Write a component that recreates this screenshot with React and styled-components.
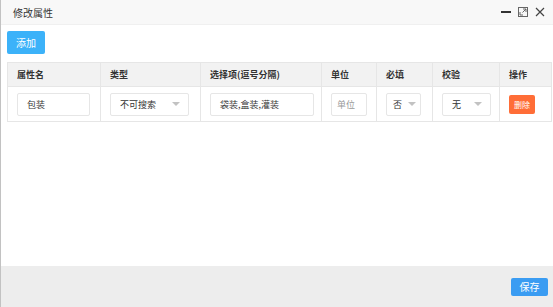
import styled, { createGlobalStyle } from "styled-components"

const Global = createGlobalStyle`
  html, body { margin: 0; padding: 0; background: #fff; }
  body { font-family: "Noto Sans CJK SC", "Liberation Sans", sans-serif; }
  * { box-sizing: border-box; }
`

const columns = [
  { title: "属性名", width: 93 },
  { title: "类型", width: 100 },
  { title: "选择项(逗号分隔)", width: 121 },
  { title: "单位", width: 55 },
  { title: "必填", width: 56 },
  { title: "校验", width: 67 },
  { title: "操作", width: 52 },
]

const App = () => {
  return (
    <Window>
      <Global />
      <TitleBar>
        <Title>修改属性</Title>
        <Tools>
          <svg width="10" height="10" viewBox="0 0 10 10">
            <rect x="0" y="4" width="10" height="2" fill="#333" />
          </svg>
          <svg width="10" height="10" viewBox="0 0 10 10">
            <rect x="0.5" y="0.5" width="9" height="9" fill="none" stroke="#666" />
            <path d="M5 2 H8 V5 M8 2 L4.5 5.5 M2 5 V8 H5" fill="none" stroke="#666" strokeWidth="1" />
          </svg>
          <svg width="10" height="10" viewBox="0 0 10 10">
            <path d="M1 1 L9 9 M9 1 L1 9" stroke="#444" strokeWidth="1.2" />
          </svg>
        </Tools>
      </TitleBar>
      <Body>
        <Button $color="#3cb2f9">添加</Button>
        <Table>
          <colgroup>
            {columns.map((c) => (
              <col key={c.title} style={{ width: c.width }} />
            ))}
          </colgroup>
          <thead>
            <tr>
              {columns.map((c) => (
                <Th key={c.title}>{c.title}</Th>
              ))}
            </tr>
          </thead>
          <tbody>
            <tr>
              <Td><Input $w={73}>包装</Input></Td>
              <Td><Select $w={79}>不可搜索<Caret /></Select></Td>
              <Td><Input $w={104}>袋装,盒装,灌装</Input></Td>
              <Td><Input $w={36} $placeholder>单位</Input></Td>
              <Td><Select $w={35} $compact>否<Caret /></Select></Td>
              <Td><Select $w={49}>无<Caret /></Select></Td>
              <Td><Danger>删除</Danger></Td>
            </tr>
          </tbody>
        </Table>
      </Body>
      <Footer>
        <Button $color="#3a9cf2" $small>保存</Button>
      </Footer>
    </Window>
  )
}

const Window = styled.div`
  display: flex;
  flex-direction: column;
  height: 307px;
  width: 553px;
  border-left: 1px solid #c2c2c2;
  overflow: hidden;
`

const TitleBar = styled.div`
  display: flex;
  align-items: center;
  justify-content: space-between;
  height: 25px;
  padding: 0 8px 0 12px;
  background: #f8f8f8;
  border-bottom: 1px solid #f0f0f0;
`

const Title = styled.div`
  font-size: 10px;
  color: #333;
`

const Tools = styled.div`
  display: flex;
  align-items: center;
  gap: 7px;
  svg { display: block; }
`

const Body = styled.div`
  flex: 1;
  padding: 6px 0 0 6px;
  display: flex;
  flex-direction: column;
  align-items: flex-start;
`

const Button = styled.div`
  display: flex;
  align-items: center;
  justify-content: center;
  width: ${(p) => (p.$small ? 37 : 38)}px;
  height: ${(p) => (p.$small ? 18 : 23)}px;
  background: ${(p) => p.$color};
  color: #fff;
  font-size: 10px;
  border-radius: 2px;
`

const Table = styled.table`
  margin-top: 8px;
  border-collapse: collapse;
  table-layout: fixed;
  width: 545px;
  font-size: 9px;
  color: #333;
`

const Th = styled.th`
  height: 24px;
  padding: 0 9px;
  text-align: left;
  font-weight: bold;
  background: #f2f2f2;
  border: 1px solid #e6e6e6;
`

const Td = styled.td`
  height: 35px;
  padding: 0 9px;
  border: 1px solid #e6e6e6;
`

const Input = styled.div`
  display: flex;
  align-items: center;
  width: ${(p) => p.$w}px;
  height: 23px;
  padding: 0 ${(p) => (p.$placeholder ? 5 : 9)}px;
  border: 1px solid #e6e6e6;
  border-radius: 2px;
  color: ${(p) => (p.$placeholder ? "#999" : "#333")};
  background: #fff;
`

const Select = styled(Input)`
  justify-content: space-between;
  padding: 0 ${(p) => (p.$compact ? 4 : 8)}px 0 ${(p) => (p.$compact ? 6 : 9)}px;
`

const Caret = styled.span`
  width: 0;
  height: 0;
  border-left: 4px solid transparent;
  border-right: 4px solid transparent;
  border-top: 4px solid #c2c2c2;
`

const Danger = styled.div`
  display: flex;
  align-items: center;
  justify-content: center;
  width: 26px;
  height: 19px;
  background: #ff6d37;
  color: #fff;
  font-size: 8px;
  border-radius: 2px;
`

const Footer = styled.div`
  height: 41px;
  background: #ededed;
  display: flex;
  align-items: center;
  justify-content: flex-end;
  padding: 0 5px 0 0;
`

export default App
